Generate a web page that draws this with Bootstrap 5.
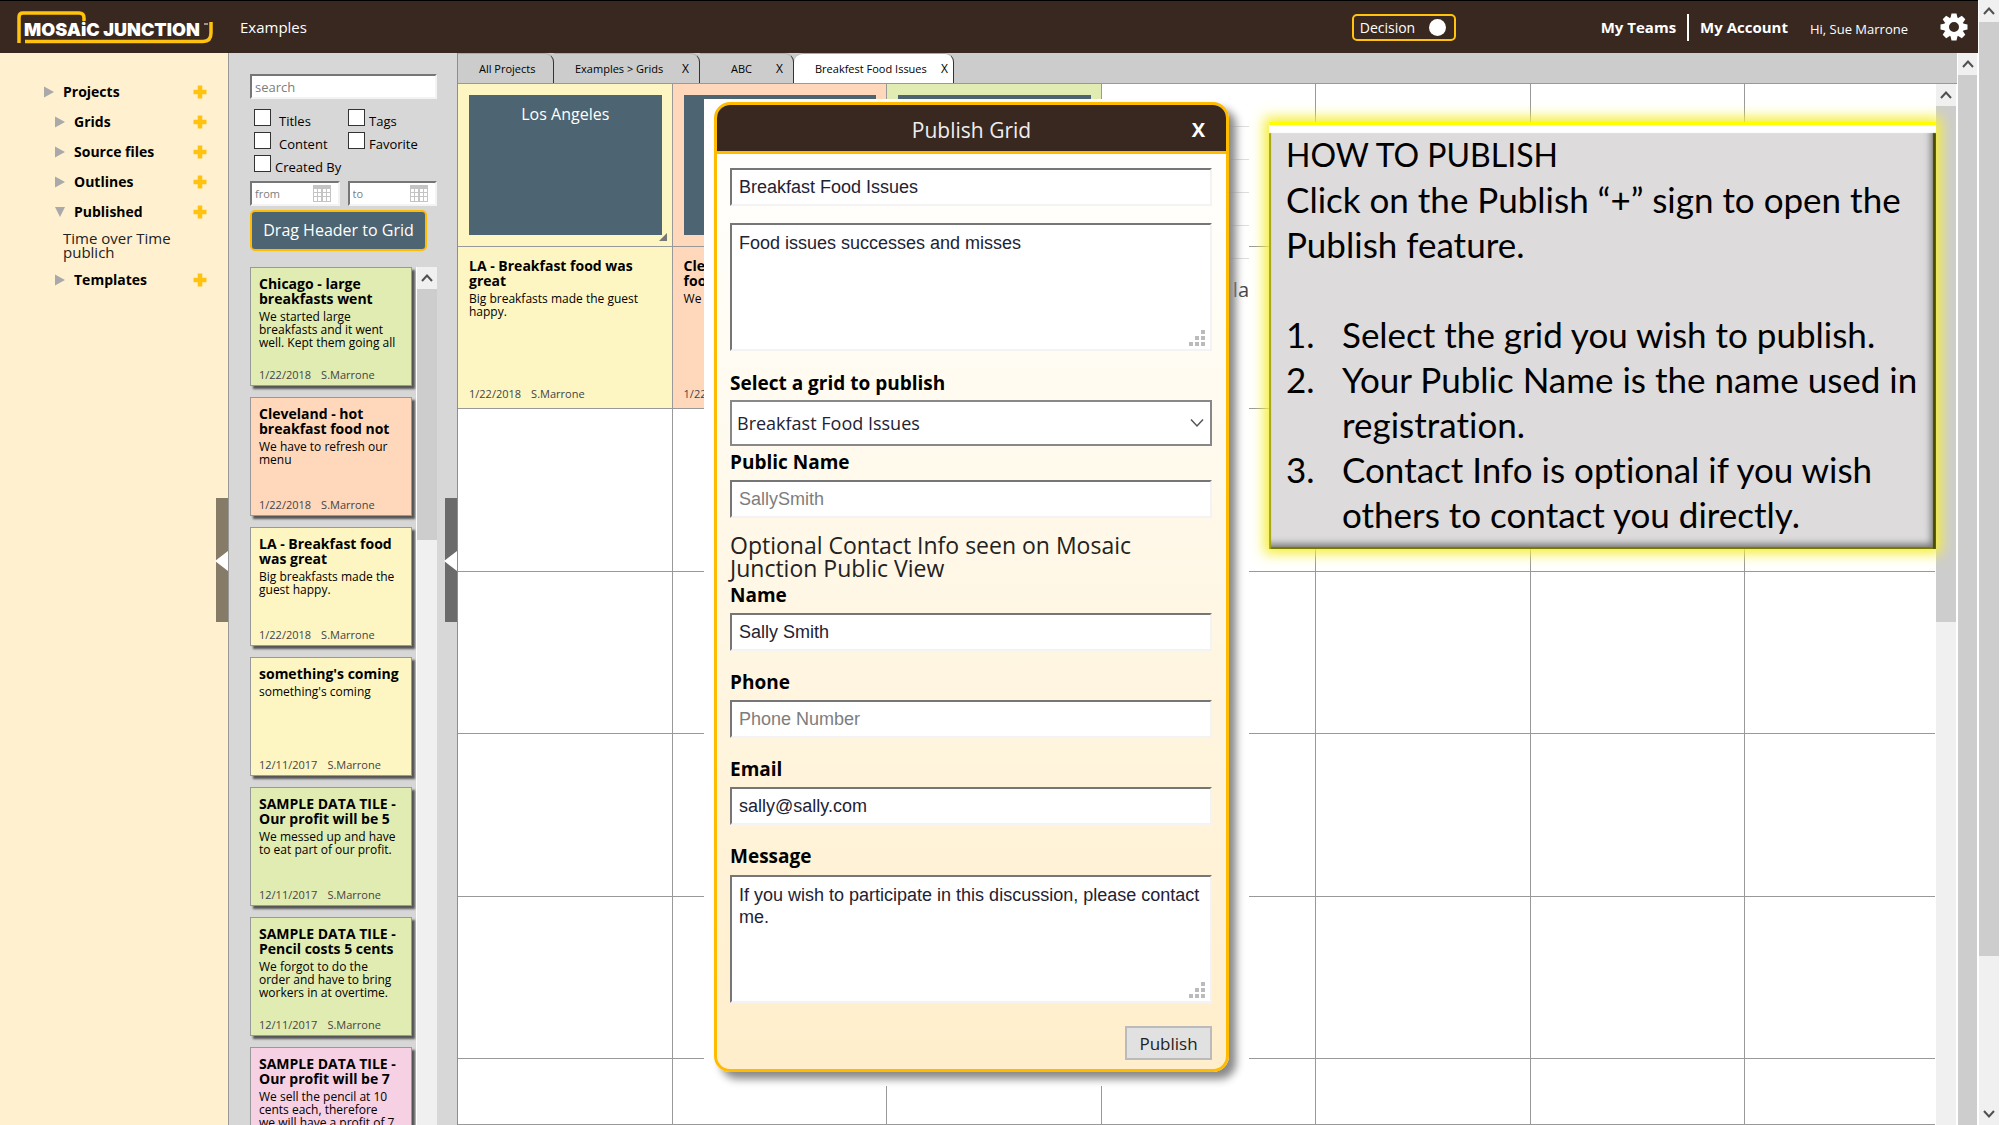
<!DOCTYPE html>
<html lang="en">
<head>
<meta charset="utf-8">
<meta name="viewport" content="width=device-width, initial-scale=1">
<title>Mosaic Junction</title>
<link href="https://cdn.jsdelivr.net/npm/bootstrap@5.3.0/dist/css/bootstrap.min.css" rel="stylesheet">
<style>
:root{--gold:#ffc20e;--edge:#fb0;--brown:#39281f;--cream:#fff1cf;--slate:#4d6472;--line:#999;--yellow:#fdf6c3;--green:#e1ecb3;--peach:#ffd8bb;--pink:#f6d1e4}
body{font-family:"Open Sans","Noto Sans",sans-serif;color:#000;font-size:13px;line-height:13px;background:#fff}
a{color:inherit;text-decoration:none}
svg{display:block}
.topbar{background:var(--brown);height:53px;border-top:1px solid #000;color:#fff;padding:0 10px 0 17px}
.brand-mark{width:197px;height:33px}
.site{font-size:15px;margin-left:26px}
.decision{border:2px solid var(--gold);border-radius:5px;background:none;color:#fff;height:27px;width:104px;font-size:14px;padding:0 8px 0 6px;margin-right:145px}
.knob{width:17px;height:17px;border-radius:50%;background:#fff}
.split{width:2px;height:27px;background:#fff;margin:0 11px}
.toplink{font-size:15px;font-weight:700;line-height:20px}
.hello{margin-left:22px}
/* scrollbars */
.sbar{background:#f0f0f0;border-left:1px solid #fff;border-right:1px solid #fff;flex:none;width:22px}
.sbar .cap{height:22px}
.sbar .thumb{background:#cdcdcd}
/* project tree */
.tree{width:229px;background:var(--cream);border-right:1px solid var(--line);padding:24px 21px 0 44px}
.tree .node{height:30px;font-size:14px;font-weight:700;line-height:28px}
.tree .kid{padding-left:11px}
.tree .arrow{width:10px;margin-right:9px}
.tree .leaf{font-size:15px;line-height:14px;margin:4px 0 6px 19px;width:120px;color:#222}
.handle{right:0;top:445px;width:12px;height:124px;background:#857b66}
.handle svg{margin:53px 0 0 -1px}
/* tile finder */
.finder{width:229px;background:#d7d7d7;border-right:1px solid #8e8e8e;padding:21px 20px 0 21px}
.inset{border:2px solid;border-color:#767676 #f3f3f3 #f3f3f3 #767676;background:#fff;border-radius:0;display:block;width:100%;outline:0}
.inset::placeholder{color:#7d7d7d;opacity:1}
.finder .search{height:25px;font-size:13px;padding:0 3px}
.checks{margin:10px 0 9px 4px;row-gap:6px}
.checks>div{height:17px}
.checks input{appearance:none;width:17px;height:17px;border:1px solid #333;background:#fff;margin:0;flex:none}
.checks label{line-height:17px;padding-top:4px}
.checks .wide{width:94px}
.dates .inset{height:25px;font-size:11px;padding:0 3px}
.dates svg{right:9px;top:4px}
.drag{height:41px;width:177px;border:2px solid var(--edge);border-radius:5px;background:var(--slate);color:#fff;font-size:16px;padding:0;margin-top:4px}
.tiles{margin-top:16px}
.tile{width:162px;height:119px;border:1px solid var(--line);box-shadow:3px 3px 2px #555;padding:8px 8px 4px;flex:none}
.ttl{font-size:14px;line-height:15px;font-weight:700;margin:0}
.txt{font-size:12px;line-height:13px;margin:4px 0 0}
.meta{font-size:11px;line-height:13px;color:#444;margin-top:auto;gap:10px}
.c-yellow{background:var(--yellow)}.c-green{background:var(--green)}.c-peach{background:var(--peach)}.c-pink{background:var(--pink)}
/* tabs */
.tabs{height:31px;background:#ccc;border-bottom:1px solid var(--line);font-size:11px}
.tabs .one{border-right:1px solid #333;border-top:1px solid #aaa;border-radius:0 9px 0 0;padding:0 10px 0 21px;width:146px}
.tabs .one.first{width:96px}
.tabs .one.brief{width:94px;padding-left:31px}
.tabs .one.on{background:#fff;border-radius:9px 9px 0 0;padding-right:5px;width:160px}
.tabs button{border:0;background:none;padding:0;font-size:12px;color:#000}
/* grid */
.board{display:grid;grid-template-columns:repeat(6,215fr) 190fr;grid-template-rows:repeat(6,325fr) 132fr}
.cell{border-right:1px solid var(--line);border-bottom:1px solid var(--line);padding:11px 10px 8px 11px;min-width:0;min-height:0}
.cell:nth-child(7n){border-right:0}
.headtile{background:var(--slate);color:#fff;font-size:16px;line-height:20px;height:140px;padding-top:9px}
.grip{right:5px;bottom:5px}
/* publish dialog */
.sheet{left:246px;top:46px;width:545px;height:987px;background:#fff;padding:3px 20px 0 10px}
.ghost{right:0;top:27px;width:24px}
.ghost i{display:block;height:1px;background:#ddd;margin-bottom:32px}
.ghost span{display:block;text-align:right;font-size:20px;line-height:24px;color:#444;margin-top:-13px}
.dialog{border:3px solid var(--edge);border-radius:16px;box-shadow:7px 7px 8px #888;height:970px;background:linear-gradient(#fff,#fffcf3 25%,#ffeecb);overflow:hidden}
.dialog header{height:49px;background:var(--brown);border-bottom:3px solid var(--edge);color:#eee;font-size:21px;line-height:50px}
.dialog header button{right:21px;top:0;border:0;background:none;color:#fff;padding:0;font-size:20px;font-weight:700;line-height:49px}
.dialog form{padding:14px 14px 0 13px}
.dialog .inset{font:18px/22px "Liberation Sans",sans-serif;height:38px;padding:0 2px 0 7px;color:#223}
.dialog textarea.inset{height:128px;padding:7px 2px 7px 7px;resize:none;overflow:hidden}
.dialog label{font-size:19px;font-weight:700;line-height:24px;display:block}
.dots{right:7px;bottom:5px}
.picker{appearance:none;width:100%;height:46px;border:2px solid #888;background:#fff;border-radius:0;font-size:18px;padding:0 5px;color:#223}
.note{font-size:23px;line-height:23px;margin:16px 0 3px;color:#222}
.send{border:2px solid #bbb;background:#e1e1e1;font-size:17px;width:87px;height:34px;padding:0;color:#222}
/* help callout */
.howto{right:21px;top:69px;width:667px;height:427px;background:#dddbdc;font-family:Lato,sans-serif;font-variant-ligatures:none;font-size:35px;line-height:45px;padding:10px 0 0 17px;box-shadow:0 0 12px 5px #f6ef3c,inset 0 3px 0 #ff0,inset 0 11px 1px #fff,inset 2px 0 1px #a3a300,inset -3px 0 1px #4c4c00,inset 0 -2px 1px #7a7a00,inset -7px -7px 7px -2px #777}
.howto h1{font-size:32px;line-height:45px;font-weight:400;margin:0}
.howto ol{list-style:none;counter-reset:n;padding:0;margin:45px 0 0}
.howto li{display:flex;counter-increment:n}
.howto li::before{content:counter(n) ".";width:56px;flex:none}
</style>
<script src="https://cdn.jsdelivr.net/npm/bootstrap@5.3.0/dist/js/bootstrap.bundle.min.js"></script>
</head>
<body class="vh-100 overflow-hidden">
<svg class="d-none">
 <symbol id="plus" viewBox="0 0 14 14"><path d="M4.700 0.500h4.600v4.200h4.200v4.600H9.300v4.200H4.700V9.300H.5V4.700h4.200z" fill="#ffc20e"/></symbol>
 <symbol id="right" viewBox="0 0 10 12"><path d="M0 0.500L10 6L0 11.500z" fill="#a9a9a9"/></symbol>
 <symbol id="down" viewBox="0 0 10 10"><path d="M0 0h10L5 10z" fill="#a9a9a9"/></symbol>
 <symbol id="up" viewBox="0 0 12 8"><path d="M1 7L6 1.500L11 7" fill="none" stroke="#505050" stroke-width="2"/></symbol>
 <symbol id="cal" viewBox="0 0 18 17"><path d="M0 0h18v17H0z" fill="#c4c4c4"/><path d="M1 4h3v3H1zM5 4h3v3H5zM10 4h3v3h-3zM14 4h3v3h-3zM1 8h3v3H1zM5 8h3v3H5zM10 8h3v3h-3zM14 8h3v3h-3zM1 12h3v4H1zM5 12h3v4H5zM10 12h3v4h-3zM14 12h3v4h-3z" fill="#fff"/></symbol>
 <symbol id="dots" viewBox="0 0 16 16"><path d="M12 0h4v4h-4zM6 6h4v4H6zM12 6h4v4h-4zM0 12h4v4H0zM6 12h4v4H6zM12 12h4v4h-4z" fill="#bbb"/></symbol>
</svg>
<div class="d-flex h-100">
 <div class="d-flex flex-column flex-grow-1" style="min-width:0">
  <header class="topbar d-flex align-items-center flex-shrink-0">
   <a href="#" aria-label="Mosaic Junction"><svg class="brand-mark" viewBox="0 0 197 33"><path d="M2 32V6Q2 2 6 2H62Q67 2 67 7V10M8 30.500H186Q194 30.500 194 22V11" fill="none" stroke="#ffc20e" stroke-width="3.500"/><text x="7" y="25" font-family="Inter,sans-serif" font-weight="900" font-size="18" fill="#fff">MOSAiC JUNCTION</text><path d="M187 13h4" stroke="#fff"/></svg></a>
   <a href="#" class="site">Examples</a>
   <button class="decision ms-auto d-flex align-items-center justify-content-between">Decision <span class="knob"></span></button>
   <a href="#" class="toplink">My Teams</a><span class="split"></span><a href="#" class="toplink">My Account</a>
   <span class="hello pt-1">Hi, Sue Marrone</span>
   <button class="border-0 bg-transparent p-0 ms-4 text-white" aria-label="Settings"><svg class="ms-2" width="28" height="28" viewBox="-14 -14 28 28"><g fill="#fff"><path fill-rule="evenodd" d="M0-10a10 10 0 1 0 0 20a10 10 0 1 0 0-20zM0-5a5 5 0 1 1 0 10a5 5 0 1 1 0-10z"/><g id="tooth"><path d="M-3.500-9L-2.500-13.500H2.500L3.500-9zM-3.500 9L-2.500 13.500H2.500L3.500 9z"/></g><use href="#tooth" transform="rotate(45)"/><use href="#tooth" transform="rotate(90)"/><use href="#tooth" transform="rotate(135)"/></g></svg></button>
  </header>
  <div class="d-flex flex-grow-1" style="min-height:0">
   <nav class="tree flex-shrink-0 position-relative">
    <div class="node d-flex align-items-center"><svg class="arrow" height="12"><use href="#right"/></svg>Projects<svg class="ms-auto" width="14" height="14"><use href="#plus"/></svg></div>
    <div class="node kid d-flex align-items-center"><svg class="arrow" height="12"><use href="#right"/></svg>Grids<svg class="ms-auto" width="14" height="14"><use href="#plus"/></svg></div>
    <div class="node kid d-flex align-items-center"><svg class="arrow" height="12"><use href="#right"/></svg>Source files<svg class="ms-auto" width="14" height="14"><use href="#plus"/></svg></div>
    <div class="node kid d-flex align-items-center"><svg class="arrow" height="12"><use href="#right"/></svg>Outlines<svg class="ms-auto" width="14" height="14"><use href="#plus"/></svg></div>
    <div class="node kid d-flex align-items-center"><svg class="arrow" height="10"><use href="#down"/></svg>Published<svg class="ms-auto" width="14" height="14"><use href="#plus"/></svg></div>
    <a href="#" class="leaf d-block">Time over Time publich</a>
    <div class="node kid d-flex align-items-center"><svg class="arrow" height="12"><use href="#right"/></svg>Templates<svg class="ms-auto" width="14" height="14"><use href="#plus"/></svg></div>
    <div class="handle position-absolute"><svg width="13" height="20"><path d="M13 0V20L0 10z" fill="#fff"/></svg></div>
   </nav>
   <aside class="finder flex-shrink-0 position-relative d-flex flex-column">
    <input class="inset search flex-shrink-0" placeholder="search" aria-label="search">
    <div class="checks d-flex flex-wrap">
     <div class="wide d-flex"><input type="checkbox" id="k1"><label class="ps-2" for="k1">Titles</label></div>
     <div class="d-flex"><input type="checkbox" id="k2"><label class="ps-1" for="k2">Tags</label></div>
     <div class="wide d-flex"><input type="checkbox" id="k3"><label class="ps-2" for="k3">Content</label></div>
     <div class="d-flex"><input type="checkbox" id="k4"><label class="ps-1" for="k4">Favorite</label></div>
     <div class="d-flex"><input type="checkbox" id="k5"><label class="ps-1" for="k5">Created By</label></div>
    </div>
    <div class="dates d-flex gap-2">
     <div class="position-relative"><input class="inset" placeholder="from" aria-label="from"><svg class="position-absolute" width="18" height="17"><use href="#cal"/></svg></div>
     <div class="position-relative"><input class="inset" placeholder="to" aria-label="to"><svg class="position-absolute" width="18" height="17"><use href="#cal"/></svg></div>
    </div>
    <button class="drag flex-shrink-0">Drag Header to Grid</button>
    <div class="tiles d-flex justify-content-between flex-grow-1 overflow-hidden" style="min-height:0">
     <div class="d-flex flex-column pe-1" style="gap:11px">
      <article class="tile c-green d-flex flex-column"><h2 class="ttl">Chicago - large breakfasts went</h2><p class="txt">We started large breakfasts and it went well. Kept them going all</p><div class="meta d-flex"><span>1/22/2018</span><span>S.Marrone</span></div></article>
      <article class="tile c-peach d-flex flex-column"><h2 class="ttl">Cleveland - hot breakfast food not</h2><p class="txt">We have to refresh our menu</p><div class="meta d-flex"><span>1/22/2018</span><span>S.Marrone</span></div></article>
      <article class="tile c-yellow d-flex flex-column"><h2 class="ttl">LA - Breakfast food was great</h2><p class="txt">Big breakfasts made the guest happy.</p><div class="meta d-flex"><span>1/22/2018</span><span>S.Marrone</span></div></article>
      <article class="tile c-yellow d-flex flex-column"><h2 class="ttl">something's coming</h2><p class="txt">something's coming</p><div class="meta d-flex"><span>12/11/2017</span><span>S.Marrone</span></div></article>
      <article class="tile c-green d-flex flex-column"><h2 class="ttl">SAMPLE DATA TILE - Our profit will be 5</h2><p class="txt">We messed up and have to eat part of our profit.</p><div class="meta d-flex"><span>12/11/2017</span><span>S.Marrone</span></div></article>
      <article class="tile c-green d-flex flex-column"><h2 class="ttl">SAMPLE DATA TILE - Pencil costs 5 cents</h2><p class="txt">We forgot to do the<br>order and have to bring workers in at overtime.</p><div class="meta d-flex"><span>12/11/2017</span><span>S.Marrone</span></div></article>
      <article class="tile c-pink d-flex flex-column"><h2 class="ttl">SAMPLE DATA TILE - Our profit will be 7</h2><p class="txt">We sell the pencil at 10 cents each, therefore<br>we will have a profit of 7</p></article>
     </div>
     <div class="sbar"><div class="cap d-flex align-items-center justify-content-center"><svg width="12" height="8"><use href="#up"/></svg></div><div class="thumb" style="height:251px"></div></div>
    </div>
    <div class="handle position-absolute" style="background:#6b6b6b"><svg width="13" height="20"><path d="M13 0V20L0 10z" fill="#fff"/></svg></div>
   </aside>
   <main class="d-flex flex-column flex-grow-1 position-relative" style="min-width:0">
    <div class="tabs d-flex flex-shrink-0">
     <div class="one first d-flex align-items-center text-nowrap"><a href="#">All Projects</a></div>
     <div class="one d-flex align-items-center justify-content-between"><a href="#">Examples &gt; Grids</a><button>X</button></div>
     <div class="one brief d-flex align-items-center justify-content-between"><a href="#">ABC</a><button>X</button></div>
     <div class="one on d-flex align-items-center justify-content-between"><a href="#">Breakfest Food Issues</a><button>X</button></div>
    </div>
    <div class="d-flex flex-grow-1" style="min-height:0">
     <div class="board flex-grow-1" id="board">
      <div class="cell c-yellow position-relative"><div class="headtile text-center">Los Angeles</div><svg class="grip position-absolute" width="8" height="8"><path d="M8 0V8H0z" fill="#777"/></svg></div>
      <div class="cell c-peach"><div class="headtile"></div></div>
      <div class="cell c-green"><div class="headtile"></div></div>
      <div class="cell"></div><div class="cell"></div><div class="cell"></div><div class="cell"></div>
      <div class="cell c-yellow d-flex flex-column"><h2 class="ttl">LA - Breakfast food was great</h2><p class="txt">Big breakfasts made the guest happy.</p><div class="meta d-flex"><span>1/22/2018</span><span>S.Marrone</span></div></div>
      <div class="cell c-peach d-flex flex-column"><h2 class="ttl">Cleveland - hot breakfast<br>food not</h2><p class="txt">We have to refresh our menu</p><div class="meta d-flex"><span>1/22/2018</span><span>S.Marrone</span></div></div>
     </div>
     <div class="sbar"><div class="cap d-flex align-items-center justify-content-center"><svg width="12" height="8"><use href="#up"/></svg></div><div class="thumb" style="height:516px"></div></div>
    </div>
    <section class="sheet position-absolute">
     <div class="ghost position-absolute"><i></i><i></i><i></i><i></i><i></i><span>la</span></div>
     <div class="dialog position-relative">
      <header class="text-center position-relative">Publish Grid<button class="position-absolute" aria-label="Close">X</button></header>
      <form>
       <input class="inset" value="Breakfast Food Issues" aria-label="Title">
       <div class="position-relative" style="margin-top:17px"><textarea class="inset" aria-label="Description">Food issues successes and misses</textarea><svg class="dots position-absolute" width="16" height="16"><use href="#dots"/></svg></div>
       <label for="pick" style="margin:20px 0 5px">Select a grid to publish</label>
       <div class="position-relative"><select class="picker" id="pick"><option>Breakfast Food Issues</option></select><svg class="position-absolute end-0 top-50 translate-middle-y me-2" width="14" height="10"><path d="M1 1.500L7 8L13 1.500" fill="none" stroke="#555" stroke-width="1.500"/></svg></div>
       <label for="pub" style="margin:4px 0 6px">Public Name</label>
       <input class="inset" id="pub" placeholder="SallySmith">
       <p class="note">Optional Contact Info seen on Mosaic Junction Public View</p>
       <label for="nm" style="margin-bottom:6px">Name</label>
       <input class="inset" id="nm" value="Sally Smith">
       <label for="ph" style="margin:19px 0 6px">Phone</label>
       <input class="inset" id="ph" placeholder="Phone Number">
       <label for="em" style="margin:19px 0 6px">Email</label>
       <input class="inset" id="em" value="sally@sally.com">
       <label for="msg" style="margin:19px 0 7px">Message</label>
       <div class="position-relative"><textarea class="inset" id="msg">If you wish to participate in this discussion, please contact me.</textarea><svg class="dots position-absolute" width="16" height="16"><use href="#dots"/></svg></div>
       <div class="d-flex justify-content-end" style="margin-top:23px"><button type="button" class="send">Publish</button></div>
      </form>
     </div>
    </section>
    <section class="howto position-absolute">
     <h1>HOW TO PUBLISH</h1>
     <div>Click on the Publish “+” sign to open the<br>Publish feature.</div>
     <ol><li><span>Select the grid you wish to publish.</span></li><li><span>Your Public Name is the name used in<br>registration.</span></li><li><span>Contact Info is optional if you wish<br>others to contact you directly.</span></li></ol>
    </section>
   </main>
   <div class="sbar" style="width:21px"><div class="cap d-flex align-items-center justify-content-center"><svg width="12" height="8"><use href="#up"/></svg></div><div class="thumb h-100"></div></div>
  </div>
 </div>
 <div class="sbar d-flex flex-column"><div class="cap d-flex align-items-center justify-content-center flex-shrink-0"><svg width="12" height="8"><use href="#up"/></svg></div><div class="thumb" style="height:83%"></div><div class="cap mt-auto d-flex align-items-center justify-content-center flex-shrink-0"><svg width="12" height="8" style="rotate:180deg"><use href="#up"/></svg></div></div>
</div>
<script>
// fill the rest of the grid with empty cells
const board=document.getElementById('board');
while(board.children.length<49){const c=document.createElement('div');c.className='cell';board.append(c)}
</script>
</body>
</html>
